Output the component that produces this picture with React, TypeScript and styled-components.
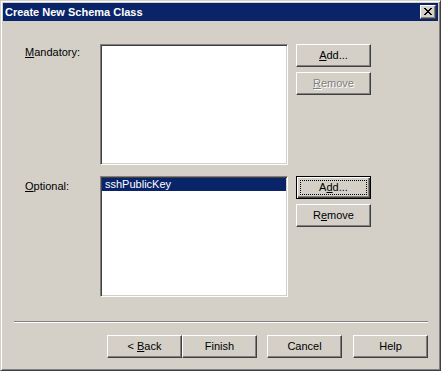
import styled, { createGlobalStyle, css } from 'styled-components';

const FACE = '#d4d0c8';
const SHADOW = '#808080';
const DARK = '#404040';
const NAVY = '#0a246a';

const GlobalStyle = createGlobalStyle`
  html, body {
    margin: 0;
    padding: 0;
    background: ${FACE};
  }
  body {
    font-family: 'Liberation Sans', Arial, sans-serif;
    font-size: 11px;
  }
`;

const Window = styled.div`
  box-sizing: border-box;
  width: 441px;
  height: 371px;
  display: flex;
  flex-direction: column;
  background: ${FACE};
  border-top: 1px solid ${FACE};
  border-left: 1px solid ${FACE};
  border-right: 1px solid ${DARK};
  border-bottom: 1px solid ${DARK};
  box-shadow: inset 1px 1px #fff, inset -1px -1px ${SHADOW};
  padding: 2px;
`;

const TitleBar = styled.div`
  height: 18px;
  display: flex;
  align-items: center;
  justify-content: space-between;
  background: ${NAVY};
  padding: 0 2px;
`;

const TitleText = styled.span`
  color: #fff;
  font-weight: bold;
  font-size: 11px;
  line-height: 13px;
  padding-top: 1px;
`;

const raised = css`
  background: ${FACE};
  border-top: 1px solid #fff;
  border-left: 1px solid #fff;
  border-right: 1px solid ${DARK};
  border-bottom: 1px solid ${DARK};
  box-shadow: inset -1px -1px ${SHADOW};
`;

const CloseButton = styled.div`
  box-sizing: border-box;
  width: 16px;
  height: 14px;
  ${raised};
  display: flex;
  svg {
    display: block;
  }
`;

const Body = styled.div`
  display: grid;
  grid-template-columns: 67px 188px 75px;
  column-gap: 8px;
  row-gap: 11px;
  padding: 23px 0 0 22px;
`;

const Label = styled.div<{ $top: number }>`
  padding-top: ${(p) => p.$top}px;
  line-height: 13px;
  color: #000;
`;

const Key = styled.span`
  text-decoration: underline;
`;

const ListBox = styled.div`
  box-sizing: border-box;
  height: 121px;
  background: #fff;
  border-top: 1px solid ${SHADOW};
  border-left: 1px solid ${SHADOW};
  border-right: 1px solid #fff;
  border-bottom: 1px solid #fff;
  box-shadow: inset 1px 1px ${DARK}, inset -1px -1px ${FACE};
  padding: 1px;
`;

const ListItem = styled.div<{ $selected?: boolean }>`
  height: 13px;
  line-height: 13px;
  padding-left: 3px;
  background: ${(p) => (p.$selected ? NAVY : 'transparent')};
  color: ${(p) => (p.$selected ? '#fff' : '#000')};
`;

const ButtonColumn = styled.div`
  display: flex;
  flex-direction: column;
  gap: 5px;
`;

const Button = styled.div<{ $disabled?: boolean; $default?: boolean; $gap?: number }>`
  box-sizing: border-box;
  width: 75px;
  height: 23px;
  margin-left: ${(p) => p.$gap ?? 0}px;
  ${raised};
  display: flex;
  align-items: center;
  justify-content: center;
  line-height: 13px;
  color: ${(p) => (p.$disabled ? SHADOW : '#000')};
  text-shadow: ${(p) => (p.$disabled ? '1px 1px #fff' : 'none')};
  position: relative;
  ${(p) =>
    p.$default &&
    css`
      border: 1px solid #000;
      box-shadow: inset 1px 1px #fff, inset -1px -1px ${DARK}, inset -2px -2px ${SHADOW};
      &::after {
        content: '';
        position: absolute;
        inset: 3px;
        border: 1px dotted #000;
      }
    `}
`;

const Separator = styled.div`
  margin: 24px 10px 0 11px;
  border-top: 1px solid ${SHADOW};
  border-bottom: 1px solid #fff;
`;

const Footer = styled.div`
  display: flex;
  justify-content: flex-end;
  padding: 12px 10px 0 0;
`;

function CloseGlyph() {
  const cells = Array(7)
    .fill(0)
    .map((_, i) => i);
  return (
    <svg width="14" height="12" viewBox="0 0 14 12" shapeRendering="crispEdges">
      {cells.map((i) => (
        <g key={i}>
          <rect x={3 + i} y={2 + i} width={2} height={1} fill="#000" />
          <rect x={9 - i} y={2 + i} width={2} height={1} fill="#000" />
        </g>
      ))}
    </svg>
  );
}

export default function App() {
  return (
    <>
      <GlobalStyle />
      <Window>
        <TitleBar>
          <TitleText>Create New Schema Class</TitleText>
          <CloseButton>
            <CloseGlyph />
          </CloseButton>
        </TitleBar>
        <Body>
          <Label $top={2}>
            <Key>M</Key>andatory:
          </Label>
          <ListBox />
          <ButtonColumn>
            <Button>
              <span>
                <Key>A</Key>dd...
              </span>
            </Button>
            <Button $disabled>
              <span>
                <Key>R</Key>emove
              </span>
            </Button>
          </ButtonColumn>

          <Label $top={4}>
            <Key>O</Key>ptional:
          </Label>
          <ListBox>
            <ListItem $selected>sshPublicKey</ListItem>
          </ListBox>
          <ButtonColumn>
            <Button $default>
              <span>
                A<Key>d</Key>d...
              </span>
            </Button>
            <Button>
              <span>
                R<Key>e</Key>move
              </span>
            </Button>
          </ButtonColumn>
        </Body>
        <Separator />
        <Footer>
          <Button>
            <span>
              &lt; <Key>B</Key>ack
            </span>
          </Button>
          <Button>Finish</Button>
          <Button $gap={10}>Cancel</Button>
          <Button $gap={11}>Help</Button>
        </Footer>
      </Window>
    </>
  );
}
